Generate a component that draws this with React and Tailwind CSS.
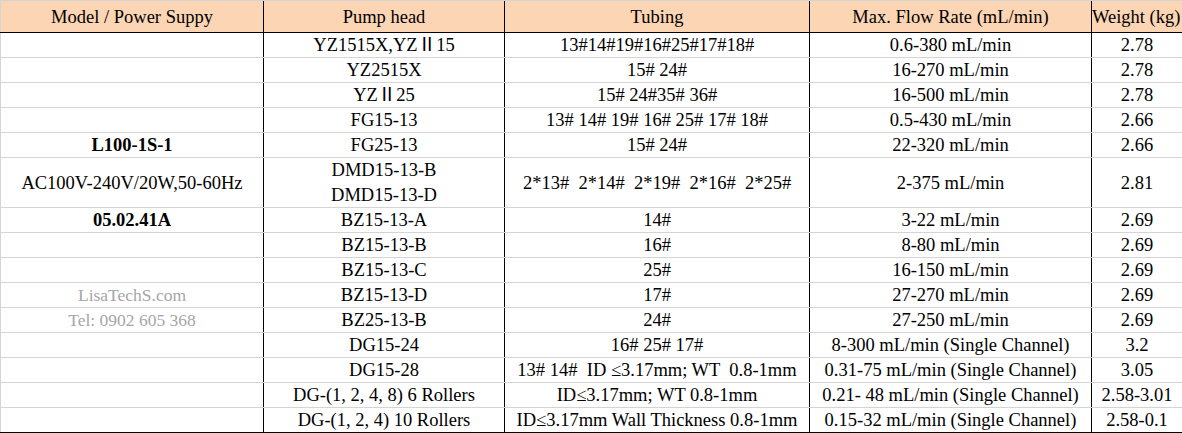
import React from "react";

const rows = [
  { model: "", pump: "YZ1515X,YZⅡ15", tubing: "13#14#19#16#25#17#18#", flow: "0.6-380 mL/min", weight: "2.78" },
  { model: "", pump: "YZ2515X", tubing: "15# 24#", flow: "16-270 mL/min", weight: "2.78" },
  { model: "", pump: "YZⅡ25", tubing: "15# 24#35# 36#", flow: "16-500 mL/min", weight: "2.78" },
  { model: "", pump: "FG15-13", tubing: "13# 14# 19# 16# 25# 17# 18#", flow: "0.5-430 mL/min", weight: "2.66" },
  { model: "L100-1S-1", bold: true, pump: "FG25-13", tubing: "15# 24#", flow: "22-320 mL/min", weight: "2.66" },
  {
    model: "AC100V-240V/20W,50-60Hz",
    pump: "DMD15-13-B\nDMD15-13-D",
    tubing: "2*13#  2*14#  2*19#  2*16#  2*25#",
    flow: "2-375 mL/min",
    weight: "2.81",
    tall: true,
  },
  { model: "05.02.41A", bold: true, pump: "BZ15-13-A", tubing: "14#", flow: "3-22 mL/min", weight: "2.69" },
  { model: "", pump: "BZ15-13-B", tubing: "16#", flow: "8-80 mL/min", weight: "2.69" },
  { model: "", pump: "BZ15-13-C", tubing: "25#", flow: "16-150 mL/min", weight: "2.69" },
  { model: "LisaTechS.com", muted: true, pump: "BZ15-13-D", tubing: "17#", flow: "27-270 mL/min", weight: "2.69" },
  { model: "Tel: 0902 605 368", muted: true, pump: "BZ25-13-B", tubing: "24#", flow: "27-250 mL/min", weight: "2.69" },
  { model: "", pump: "DG15-24", tubing: "16# 25# 17#", flow: "8-300 mL/min (Single Channel)", weight: "3.2" },
  { model: "", pump: "DG15-28", tubing: "13# 14#  ID ≤3.17mm; WT  0.8-1mm", flow: "0.31-75 mL/min (Single Channel)", weight: "3.05" },
  { model: "", pump: "DG-(1, 2, 4, 8) 6 Rollers", tubing: "ID≤3.17mm; WT 0.8-1mm", flow: "0.21- 48 mL/min (Single Channel)", weight: "2.58-3.01" },
  { model: "", pump: "DG-(1, 2, 4) 10 Rollers", tubing: "ID≤3.17mm Wall Thickness 0.8-1mm", flow: "0.15-32 mL/min (Single Channel)", weight: "2.58-0.1" },
];

// excel-ish cells sit a hair low, hence pt-px
const cell = "flex items-center justify-center text-center whitespace-pre leading-[25px] pt-px overflow-hidden";

export default function App() {
  return (
    <div className="w-[1182px] h-[433px] overflow-hidden bg-white text-black text-[18.5px] font-[Liberation_Serif,Noto_Sans_CJK_SC,serif]">
      <div className="flex h-[33px] bg-[#fcd5b4] border-t border-b border-t-[#d4d4d4] border-b-black">
        <div className={`${cell} w-[264px] border-l border-l-[#d4d4d4] border-r border-r-black`}>Model / Power Suppy</div>
        <div className={`${cell} w-[241px] border-r border-black`}>Pump head</div>
        <div className={`${cell} w-[305px] border-r border-black`}>Tubing</div>
        <div className={`${cell} w-[282px] border-r border-black`}>Max. Flow Rate (mL/min)</div>
        <div className={`${cell} flex-1 justify-start`}>Weight (kg)</div>
      </div>
      {rows.map((row, i) => (
        <div
          key={i}
          className={`flex ${row.tall ? "h-[50px]" : "h-[25px]"} border-b ${
            i === rows.length - 1 ? "border-black" : "border-[#d4d4d4]"
          }`}
        >
          <div
            className={`${cell} w-[264px] border-l border-l-[#d4d4d4] border-r border-r-black ${
              row.bold ? "font-bold" : ""
            } ${row.muted ? "text-[#a6a6a6] text-[17.5px]" : ""}`}
          >
            {row.model}
          </div>
          <div className={`${cell} w-[241px] border-r border-black`}>{row.pump}</div>
          <div className={`${cell} w-[305px] border-r border-black`}>{row.tubing}</div>
          <div className={`${cell} w-[282px] border-r border-black`}>{row.flow}</div>
          <div className={`${cell} flex-1`}>{row.weight}</div>
        </div>
      ))}
    </div>
  );
}
